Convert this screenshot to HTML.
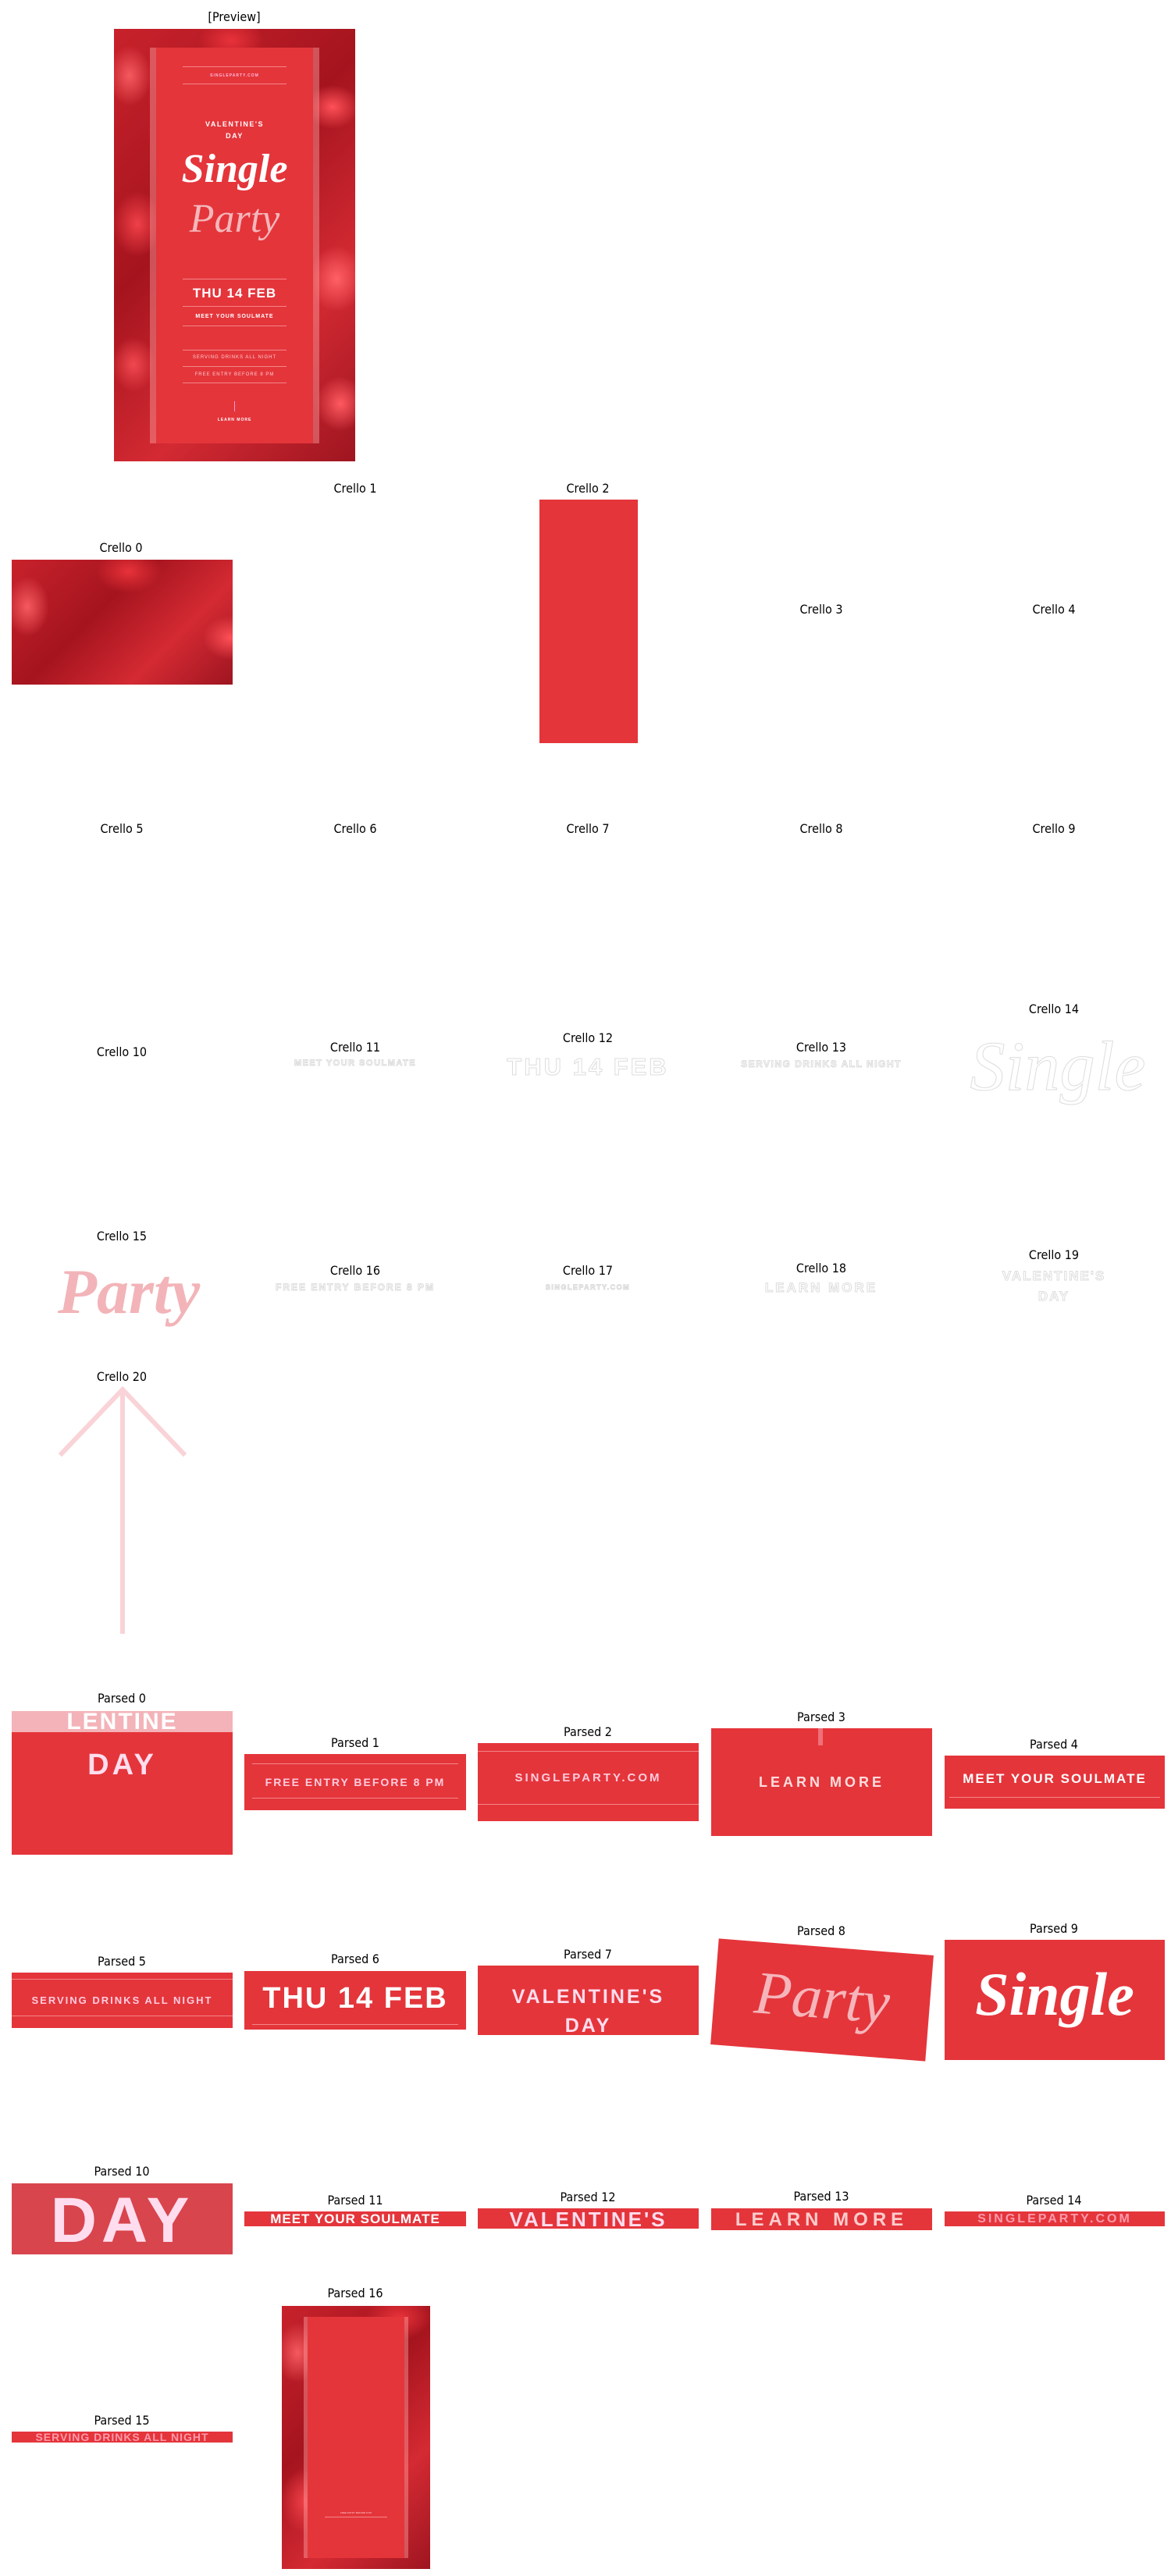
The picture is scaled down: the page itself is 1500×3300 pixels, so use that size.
<!DOCTYPE html>
<html><head><meta charset="utf-8"><style>
*{margin:0;padding:0;box-sizing:border-box}
body{width:1500px;height:3300px;background:#fff;position:relative;overflow:hidden;font-family:"DejaVu Sans Condensed","DejaVu Sans","Liberation Sans",sans-serif}
.t{position:absolute;width:240px;text-align:center;font-size:16px;line-height:20px;color:#000;font-stretch:condensed}
.a{position:absolute}
.r{position:absolute;background:#e4353b;overflow:hidden;color:#fff;font-family:"Liberation Sans",sans-serif;font-weight:bold;text-align:center;white-space:nowrap}
.pet{background:
radial-gradient(ellipse 40px 55px at 20px 60px,#f55a5f,transparent 70%),
radial-gradient(ellipse 50px 40px at 280px 100px,#ff5058,transparent 70%),
radial-gradient(ellipse 45px 60px at 30px 250px,#f04048,transparent 70%),
radial-gradient(ellipse 50px 60px at 285px 320px,#ff6066,transparent 70%),
radial-gradient(ellipse 40px 50px at 25px 430px,#f24850,transparent 70%),
radial-gradient(ellipse 45px 50px at 290px 480px,#ff5a60,transparent 70%),
radial-gradient(ellipse 60px 40px at 150px 15px,#e8323a,transparent 70%),
linear-gradient(135deg,#c8222c,#a5141e 40%,#d42a33 70%,#9e1520);}
.ln{position:absolute;height:1px;background:rgba(255,200,200,.55)}
.ot{color:#fff;-webkit-text-stroke:1px #ddd;font-family:"Liberation Sans",sans-serif;font-weight:bold;position:absolute;text-align:center;white-space:nowrap}
</style></head><body>

<div class="t" style="left:180px;top:12px">[Preview]</div>
<div class="a pet" style="left:146px;top:37px;width:309px;height:554px">
  <div class="a" style="left:46px;top:24px;width:217px;height:507px;background:rgba(255,160,160,.45)"></div>
  <div class="a" style="left:54px;top:24px;width:201px;height:507px;background:#e4353b"></div>
  <div class="ln" style="left:88px;width:133px;top:48px"></div>
  <div class="a" style="left:54px;width:201px;top:57px;text-align:center;font:bold 5px 'Liberation Sans';color:#fbd;letter-spacing:1px">SINGLEPARTY.COM</div>
  <div class="ln" style="left:88px;width:133px;top:70px"></div>
  <div class="a" style="left:54px;width:201px;top:115px;text-align:center;font:bold 9px/15px 'Liberation Sans';color:#fff;letter-spacing:1.5px">VALENTINE'S<br>DAY</div>
  <div class="a" style="left:54px;width:201px;top:150px;text-align:center;font:italic bold 52px/60px 'Liberation Serif';color:#fff">Single</div>
  <div class="a" style="left:54px;width:201px;top:214px;text-align:center;font:italic 52px/60px 'Liberation Serif';color:#f3b7ba">Party</div>
  <div class="ln" style="left:88px;width:133px;top:320px"></div>
  <div class="a" style="left:54px;width:201px;top:329px;text-align:center;font:bold 17px/20px 'Liberation Sans';color:#fff;letter-spacing:1px">THU 14 FEB</div>
  <div class="ln" style="left:88px;width:133px;top:355px"></div>
  <div class="a" style="left:54px;width:201px;top:365px;text-align:center;font:bold 7px 'Liberation Sans';color:#fff;letter-spacing:1px">MEET YOUR SOULMATE</div>
  <div class="ln" style="left:88px;width:133px;top:380px"></div>
  <div class="ln" style="left:88px;width:133px;top:411px"></div>
  <div class="a" style="left:54px;width:201px;top:418px;text-align:center;font:6px 'Liberation Sans';color:#fcc;letter-spacing:1px">SERVING DRINKS ALL NIGHT</div>
  <div class="ln" style="left:88px;width:133px;top:432px"></div>
  <div class="a" style="left:54px;width:201px;top:440px;text-align:center;font:6px 'Liberation Sans';color:#fcc;letter-spacing:1px">FREE ENTRY BEFORE 8 PM</div>
  <div class="ln" style="left:88px;width:133px;top:453px"></div>
  <div class="a" style="left:154px;top:477px;width:1px;height:13px;background:#f9c"></div>
  <div class="a" style="left:54px;width:201px;top:498px;text-align:center;font:bold 5px 'Liberation Sans';color:#fff;letter-spacing:1px">LEARN MORE</div>
</div>

<div class="t" style="left:35px;top:692px">Crello 0</div>
<div class="a pet" style="left:15px;top:717px;width:283px;height:160px"></div>
<div class="t" style="left:335px;top:616px">Crello 1</div>
<div class="t" style="left:633px;top:616px">Crello 2</div>
<div class="a" style="left:691px;top:640px;width:126px;height:312px;background:#e4353b"></div>
<div class="t" style="left:932px;top:771px">Crello 3</div>
<div class="t" style="left:1230px;top:771px">Crello 4</div>

<div class="t" style="left:36px;top:1052px">Crello 5</div>
<div class="t" style="left:335px;top:1052px">Crello 6</div>
<div class="t" style="left:633px;top:1052px">Crello 7</div>
<div class="t" style="left:932px;top:1052px">Crello 8</div>
<div class="t" style="left:1230px;top:1052px">Crello 9</div>

<div class="t" style="left:36px;top:1338px">Crello 10</div>
<div class="t" style="left:335px;top:1332px">Crello 11</div>
<div class="ot" style="left:335px;width:240px;top:1356px;font-size:11px;letter-spacing:1.5px">MEET YOUR SOULMATE</div>
<div class="t" style="left:633px;top:1320px">Crello 12</div>
<div class="ot" style="left:613px;width:280px;top:1349px;font-size:31px;letter-spacing:3px">THU 14 FEB</div>
<div class="t" style="left:932px;top:1332px">Crello 13</div>
<div class="ot" style="left:912px;width:280px;top:1356px;font-size:12px;letter-spacing:1.5px">SERVING DRINKS ALL NIGHT</div>
<div class="t" style="left:1230px;top:1283px">Crello 14</div>
<div class="ot" style="left:1210px;width:290px;top:1312px;font:italic 90px/110px 'Liberation Serif';-webkit-text-stroke:1px #ddd">Single</div>

<div class="t" style="left:36px;top:1574px">Crello 15</div>
<div class="a" style="left:25px;top:1600px;width:280px;height:100px;text-align:center;font:italic bold 82px/110px 'Liberation Serif';color:#f2b4b8;overflow:hidden">Party</div>
<div class="t" style="left:335px;top:1618px">Crello 16</div>
<div class="ot" style="left:315px;width:280px;top:1642px;font-size:12px;letter-spacing:2px">FREE ENTRY BEFORE 8 PM</div>
<div class="t" style="left:633px;top:1618px">Crello 17</div>
<div class="ot" style="left:633px;width:240px;top:1644px;font-size:9px;letter-spacing:1.5px">SINGLEPARTY.COM</div>
<div class="t" style="left:932px;top:1615px">Crello 18</div>
<div class="ot" style="left:932px;width:240px;top:1640px;font-size:17px;letter-spacing:3px">LEARN MORE</div>
<div class="t" style="left:1230px;top:1598px">Crello 19</div>
<div class="ot" style="left:1230px;width:240px;top:1622px;font-size:17px;line-height:26px;letter-spacing:2px">VALENTINE'S<br>DAY</div>

<div class="t" style="left:36px;top:1754px">Crello 20</div>
<svg class="a" style="left:70px;top:1770px" width="180" height="330">
<g stroke="#f9d3d7" stroke-width="6" fill="none" stroke-linecap="square">
<line x1="87" y1="12" x2="87" y2="320"/>
<polyline points="9,92 87,10 165,92"/></g></svg>

<div class="t" style="left:36px;top:2166px">Parsed 0</div>
<div class="r" style="left:15px;top:2192px;width:283px;height:184px">
  <div style="position:absolute;left:0;top:0;width:283px;height:27px;background:#f3b3b8;color:#fff;font-size:30px;line-height:27px;letter-spacing:2px">LENTINE</div>
  <div style="position:absolute;left:0;width:283px;top:48px;font-size:38px;letter-spacing:4px;color:#fde">DAY</div>
</div>
<div class="t" style="left:335px;top:2223px">Parsed 1</div>
<div class="r" style="left:313px;top:2247px;width:284px;height:72px;font-size:14px;line-height:72px;letter-spacing:2px;color:#fcd">FREE ENTRY BEFORE 8 PM<div class="ln" style="left:10px;right:10px;top:12px"></div><div class="ln" style="left:10px;right:10px;top:56px"></div></div>
<div class="t" style="left:633px;top:2209px">Parsed 2</div>
<div class="r" style="left:612px;top:2233px;width:283px;height:100px;font-size:15px;line-height:90px;letter-spacing:3px;color:#fcd">SINGLEPARTY.COM<div class="ln" style="left:0;right:0;top:10px"></div><div class="ln" style="left:0;right:0;top:78px"></div></div>
<div class="t" style="left:932px;top:2190px">Parsed 3</div>
<div class="r" style="left:911px;top:2214px;width:283px;height:138px;font-size:18px;line-height:138px;letter-spacing:4px;color:#fdd">LEARN MORE<div style="position:absolute;left:137px;top:0;width:6px;height:22px;background:#f07078"></div></div>
<div class="t" style="left:1230px;top:2225px">Parsed 4</div>
<div class="r" style="left:1210px;top:2249px;width:282px;height:68px;font-size:17px;line-height:60px;letter-spacing:2px">MEET YOUR SOULMATE<div class="ln" style="left:6px;right:6px;top:53px"></div></div>

<div class="t" style="left:36px;top:2503px">Parsed 5</div>
<div class="r" style="left:15px;top:2527px;width:283px;height:71px;font-size:13px;line-height:71px;letter-spacing:2px;color:#fcd">SERVING DRINKS ALL NIGHT<div class="ln" style="left:0;right:0;top:8px"></div><div class="ln" style="left:0;right:0;top:55px"></div></div>
<div class="t" style="left:335px;top:2500px">Parsed 6</div>
<div class="r" style="left:313px;top:2525px;width:284px;height:75px;font-size:38px;line-height:70px;letter-spacing:2px">THU 14 FEB<div class="ln" style="left:10px;right:10px;top:68px"></div></div>
<div class="t" style="left:633px;top:2494px">Parsed 7</div>
<div class="r" style="left:612px;top:2518px;width:283px;height:89px;font-size:25px;line-height:37px;letter-spacing:3px;padding-top:22px;color:#fde">VALENTINE'S<br>DAY</div>
<div class="t" style="left:932px;top:2464px">Parsed 8</div>
<div class="r" style="left:915px;top:2494px;width:276px;height:136px;transform:rotate(4.5deg);font:italic 78px/130px 'Liberation Serif';color:#f5b5ba">Party</div>
<div class="t" style="left:1230px;top:2461px">Parsed 9</div>
<div class="r" style="left:1210px;top:2485px;width:282px;height:154px;font:italic bold 78px/140px 'Liberation Serif';color:#fff">Single</div>

<div class="t" style="left:36px;top:2772px">Parsed 10</div>
<div class="r" style="left:15px;top:2797px;width:283px;height:91px;font-size:82px;line-height:95px;letter-spacing:6px;color:#fde;background:#d8454d">DAY</div>
<div class="t" style="left:335px;top:2809px">Parsed 11</div>
<div class="r" style="left:313px;top:2833px;width:284px;height:19px;font-size:17px;line-height:19px;letter-spacing:1px">MEET YOUR SOULMATE</div>
<div class="t" style="left:633px;top:2805px">Parsed 12</div>
<div class="r" style="left:612px;top:2829px;width:283px;height:26px;font-size:26px;line-height:28px;letter-spacing:3px;color:#fde">VALENTINE'S</div>
<div class="t" style="left:932px;top:2804px">Parsed 13</div>
<div class="r" style="left:911px;top:2829px;width:283px;height:28px;font-size:24px;line-height:30px;letter-spacing:6px;color:#fcc">LEARN MORE</div>
<div class="t" style="left:1230px;top:2809px">Parsed 14</div>
<div class="r" style="left:1210px;top:2833px;width:282px;height:19px;font-size:16px;line-height:19px;letter-spacing:3px;color:#f9a">SINGLEPARTY.COM</div>

<div class="t" style="left:36px;top:3091px">Parsed 15</div>
<div class="r" style="left:15px;top:3115px;width:283px;height:14px;font-size:14px;line-height:14px;letter-spacing:1px;color:#f9a">SERVING DRINKS ALL NIGHT</div>
<div class="t" style="left:335px;top:2928px">Parsed 16</div>
<div class="a pet" style="left:361px;top:2954px;width:190px;height:337px">
  <div class="a" style="left:28px;top:14px;width:134px;height:309px;background:rgba(255,160,160,.45)"></div>
  <div class="a" style="left:33px;top:14px;width:124px;height:309px;background:#e4353b"></div>
  <div class="ln" style="left:55px;width:80px;top:270px"></div>
  <div class="a" style="left:33px;width:124px;top:263px;text-align:center;font:3px 'Liberation Sans';color:#fcc">FREE ENTRY BEFORE 8 PM</div>
</div>
</body></html>
